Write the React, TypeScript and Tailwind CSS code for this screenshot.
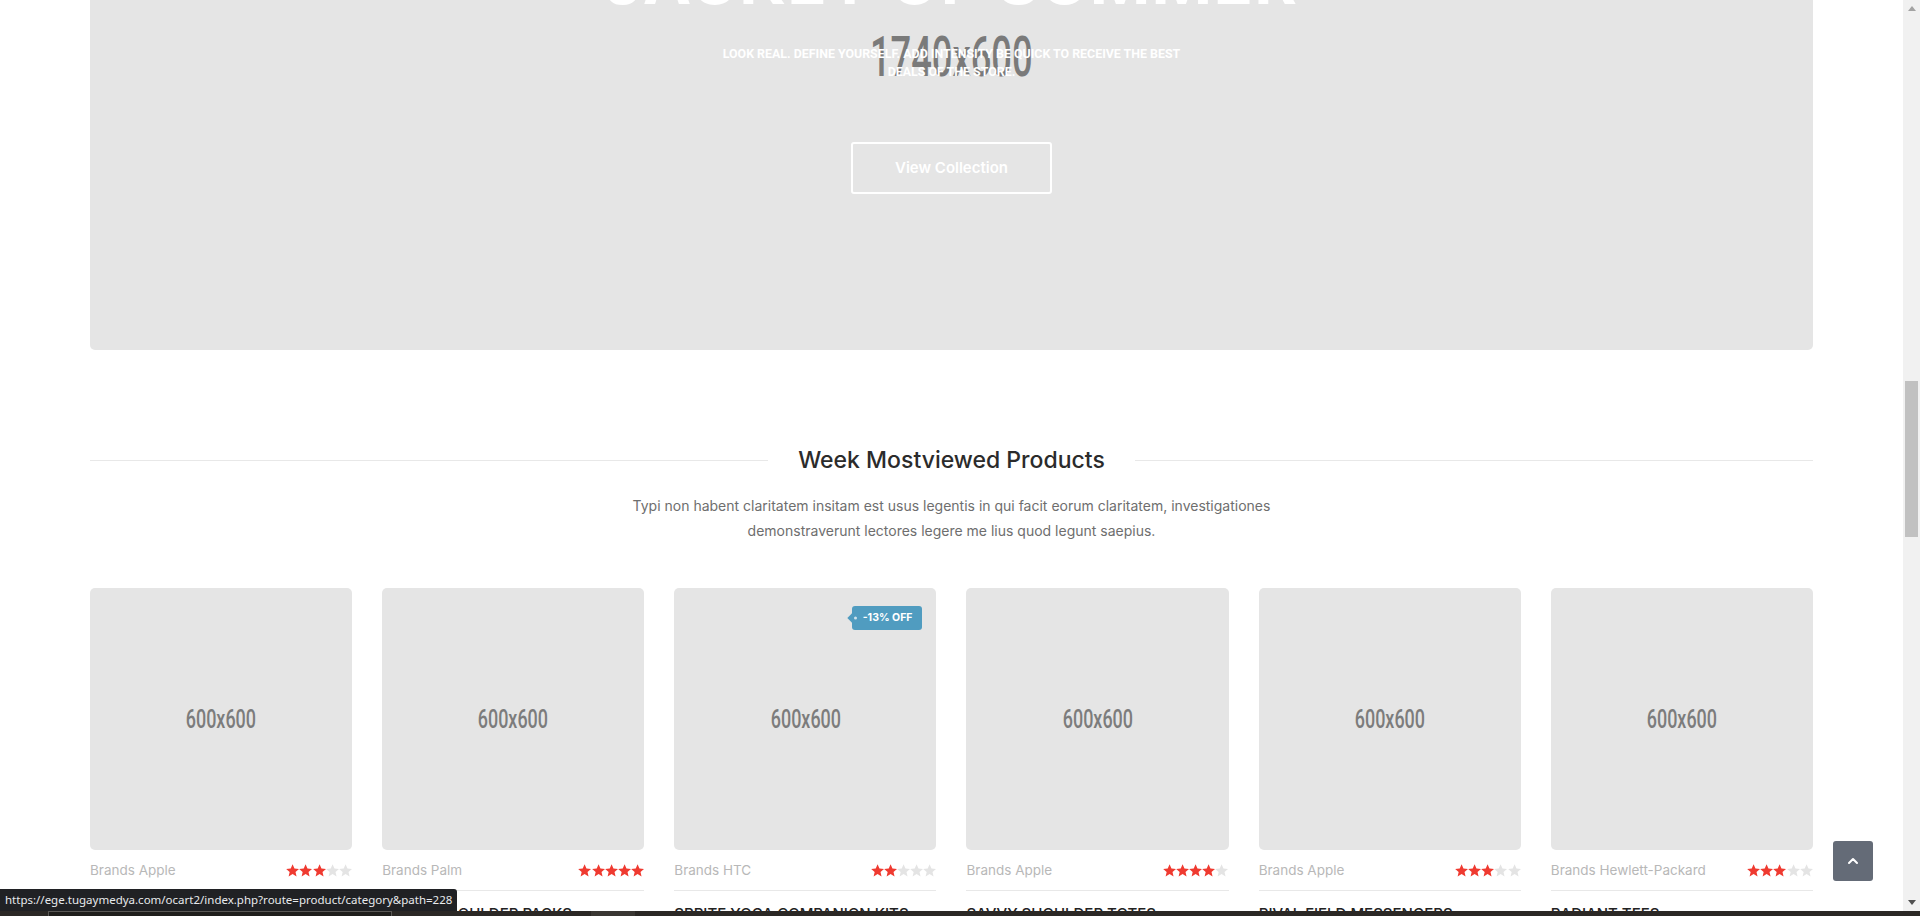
import { ChevronUp } from 'lucide-react';

interface Product {
  id: number;
  brand: string;
  name: string;
  rating: number;
  badge?: string;
}

const products: Product[] = [
  { id: 1, brand: 'Brands Apple', name: 'Push It Messenger Bags', rating: 3 },
  { id: 2, brand: 'Brands Palm', name: 'Joust Shoulder Packs', rating: 5 },
  { id: 3, brand: 'Brands HTC', name: 'Sprite Yoga Companion Kits', rating: 2, badge: '-13% OFF' },
  { id: 4, brand: 'Brands Apple', name: 'Savvy Shoulder Totes', rating: 4 },
  { id: 5, brand: 'Brands Apple', name: 'Rival Field Messengers', rating: 3 },
  { id: 6, brand: 'Brands Hewlett-Packard', name: 'Radiant Tees', rating: 3 },
];

function Star({ on }: { on: boolean }) {
  return (
    <svg viewBox="1 1.5 22 21" className={on ? 'w-[13.2px] h-[13px] fill-[#ef3a30]' : 'w-[13.2px] h-[13px] fill-[#e4e4e4]'}>
      <path d="M12 1.5l3.1 7.1 7.6.7-5.8 5.1 1.7 7.6L12 18l-6.6 4 1.7-7.6-5.8-5.1 7.6-.7z" />
    </svg>
  );
}

function ProductCard({ product }: { product: Product }) {
  return (
    <div className="flex flex-col">
      <div className="relative h-[262px] rounded-[5px] bg-[#e5e5e5] flex items-center justify-center">
        <span className="font-['Roboto',sans-serif] font-medium text-[26px] text-[#7c7c7c] scale-x-[0.69]">600x600</span>
        {product.badge && (
          <span className="absolute top-[18px] right-[14px] h-[24px] pl-[11px] pr-[10px] flex items-center rounded-[3px] bg-[#509cc0] text-white text-[10.5px] font-bold font-['Inter',sans-serif]">
            <span className="absolute -left-[3px] top-1/2 -translate-y-1/2 w-[8px] h-[8px] rotate-45 bg-[#509cc0]" />
            <span className="absolute left-[2px] top-1/2 -translate-y-1/2 w-[3px] h-[3px] rounded-full bg-[#cfe3ec]" />
            {product.badge}
          </span>
        )}
      </div>
      <div className="mt-[10px] h-[20px] flex items-center justify-between">
        <span className="text-[13.5px] text-[#b8b8b8]">{product.brand}</span>
        <div className="flex">
          {[1, 2, 3, 4, 5].map((i) => (
            <Star key={i} on={i <= product.rating} />
          ))}
        </div>
      </div>
      <div className="mt-[10px] h-px bg-[#e8e8e8]" />
      <h4 className="mt-[13px] text-[15px] leading-[20px] font-medium uppercase text-[#222]">{product.name}</h4>
    </div>
  );
}

function Scrollbar() {
  return (
    <div className="w-[17px] bg-[#f1f1f1] flex flex-col items-center">
      <div className="h-[17px] flex items-center justify-center">
        <svg viewBox="0 0 8 5" className="w-[8px] h-[5px] fill-[#a3a3a3]"><path d="M4 0l4 5H0z" /></svg>
      </div>
      <div className="mt-[364px] w-[13px] h-[156px] bg-[#c1c1c1]" />
      <div className="flex-1" />
      <div className="h-[17px] flex items-center justify-center">
        <svg viewBox="0 0 8 5" className="w-[8px] h-[5px] fill-[#505050]"><path d="M0 0h8L4 5z" /></svg>
      </div>
    </div>
  );
}

export default function App() {
  return (
    <div className="relative h-[916px] overflow-hidden bg-white flex flex-col font-['Inter',sans-serif]">
      <div className="flex h-[911px]">
        <main className="flex-1 overflow-hidden px-[90px]">
          {/* Hero banner */}
          <section className="relative h-[350px] overflow-hidden rounded-b-[5px] bg-[#e5e5e5]">
            <div className="-mt-[240px] h-[594px] flex items-center justify-center">
              <span className="font-['Roboto',sans-serif] font-medium text-[55px] leading-none text-[#7a7a7a] scale-x-[0.66]">1740x600</span>
            </div>
            <div className="absolute inset-x-0 top-0 flex flex-col items-center text-white">
              <h2 className="-mt-[52px] text-[65px] leading-none font-bold uppercase tracking-[0.02em]">Jacket of Summer</h2>
              <p className="mt-[32px] text-center font-['Roboto',sans-serif] font-bold text-[12.4px] leading-[18px] uppercase">
                Look real. Define yourself. Add intensity be quick to receive the best
                <br />
                deals of the store.
              </p>
              <button className="mt-[61px] w-[201px] h-[52px] border-2 border-white rounded-[3px] text-[15px] font-semibold">
                View Collection
              </button>
            </div>
          </section>

          {/* Week mostviewed */}
          <section className="mt-[95px]">
            <div className="flex items-center gap-[30px]">
              <div className="flex-1 h-px bg-[#e8e8e8]" />
              <h3 className="text-[23px] leading-[30px] font-medium text-[#2b2b2b]">Week Mostviewed Products</h3>
              <div className="flex-1 h-px bg-[#e8e8e8]" />
            </div>
            <p className="mt-[18px] text-center text-[14px] leading-[25px] text-[#6e6e6e]">
              Typi non habent claritatem insitam est usus legentis in qui facit eorum claritatem, investigationes
              <br />
              demonstraverunt lectores legere me lius quod legunt saepius.
            </p>
            <div className="mt-[45px] grid grid-cols-6 gap-[30px]">
              {products.map((p) => (
                <ProductCard key={p.id} product={p} />
              ))}
            </div>
          </section>
        </main>
        <Scrollbar />
      </div>

      {/* taskbar strip */}
      <div className="h-[5px] bg-[#2b2825] flex">
        <div className="ml-[48px] w-[344px] border-x border-t border-[#5a5855] bg-[#1f1e1c]" />
        <div className="ml-[199px] w-[44px] bg-[#3a3733]" />
      </div>

      {/* back to top */}
      <button className="absolute left-[1833px] top-[841px] w-[40px] h-[40px] rounded-[3px] bg-[#646b77] flex items-center justify-center text-white">
        <ChevronUp size={16} strokeWidth={3} />
      </button>

      {/* link status bubble */}
      <div className="absolute left-0 bottom-[5px] h-[22px] pl-[5px] pr-[5px] flex items-center rounded-tr-[3px] bg-[#202124] text-[#e8eaed] text-[11.5px] font-['Noto_Sans',sans-serif]">
        https://ege.tugaymedya.com/ocart2/index.php?route=product/category&amp;path=228
      </div>
    </div>
  );
}
